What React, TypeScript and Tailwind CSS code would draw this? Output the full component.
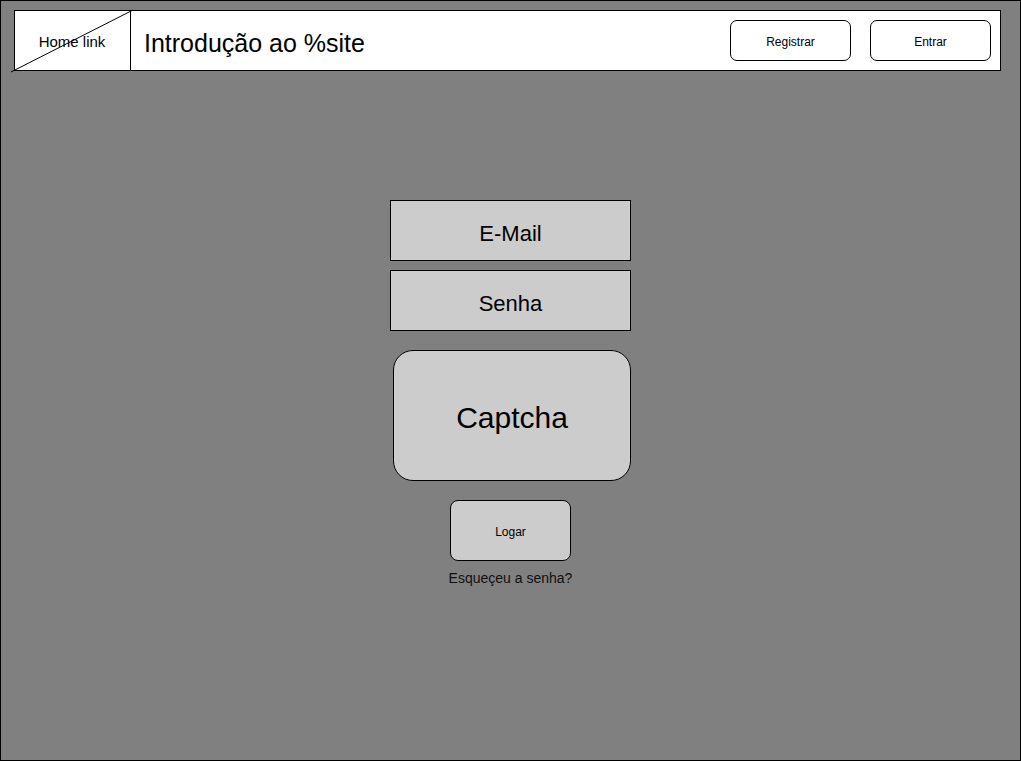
export default function App() {
  return (
    <div className="w-[1021px] h-[761px] bg-[#808080] border border-black font-['Liberation_Sans',Arial,sans-serif] text-black">
      {/* top bar */}
      <header className="ml-[13px] mt-[9px] w-[987px] h-[61px] bg-white border border-black flex items-stretch">
        <div className="relative w-[116px] shrink-0 border-r border-black flex items-center justify-center">
          <span className="text-[15px] pt-[4px] pr-[1px]">Home link</span>
          <svg className="absolute -left-[4px] -top-[1px] overflow-visible" width="124" height="62" viewBox="0 0 124 62">
            <line x1="0" y1="62" x2="122" y2="0" stroke="#000" strokeWidth="1" />
          </svg>
        </div>
        <div className="flex-1 flex items-center pl-[13px] pt-[6px]">
          <h1 className="text-[25px] leading-none">Introdução ao %site</h1>
        </div>
        <div className="flex items-center gap-[19px] pr-[9px]">
          <button className="w-[121px] h-[41px] rounded-[7px] border border-black bg-white text-[12px] pt-[2px]">Registrar</button>
          <button className="w-[121px] h-[41px] rounded-[7px] border border-black bg-white text-[12px] pt-[2px]">Entrar</button>
        </div>
      </header>

      {/* login form */}
      <main className="flex flex-col items-center mt-[129px]">
        <div className="w-[241px] h-[61px] bg-[#cccccc] border border-black flex items-center justify-center pt-[5px] text-[22px]">
          E-Mail
        </div>
        <div className="w-[241px] h-[61px] bg-[#cccccc] border border-black flex items-center justify-center mt-[9px] pt-[5px] text-[22px]">
          Senha
        </div>
        <div className="w-[238px] h-[131px] bg-[#cccccc] border border-black rounded-[20px] flex items-center justify-center ml-[3px] mt-[19px] pt-[4px] text-[30px]">
          Captcha
        </div>
        <button className="w-[121px] h-[61px] bg-[#cccccc] border border-black rounded-[8px] flex items-center justify-center mt-[19px] pt-[2px] text-[12px]">
          Logar
        </button>
        <a className="mt-[7px] text-[14px] text-[#111]">Esqueçeu a senha?</a>
      </main>
    </div>
  );
}
